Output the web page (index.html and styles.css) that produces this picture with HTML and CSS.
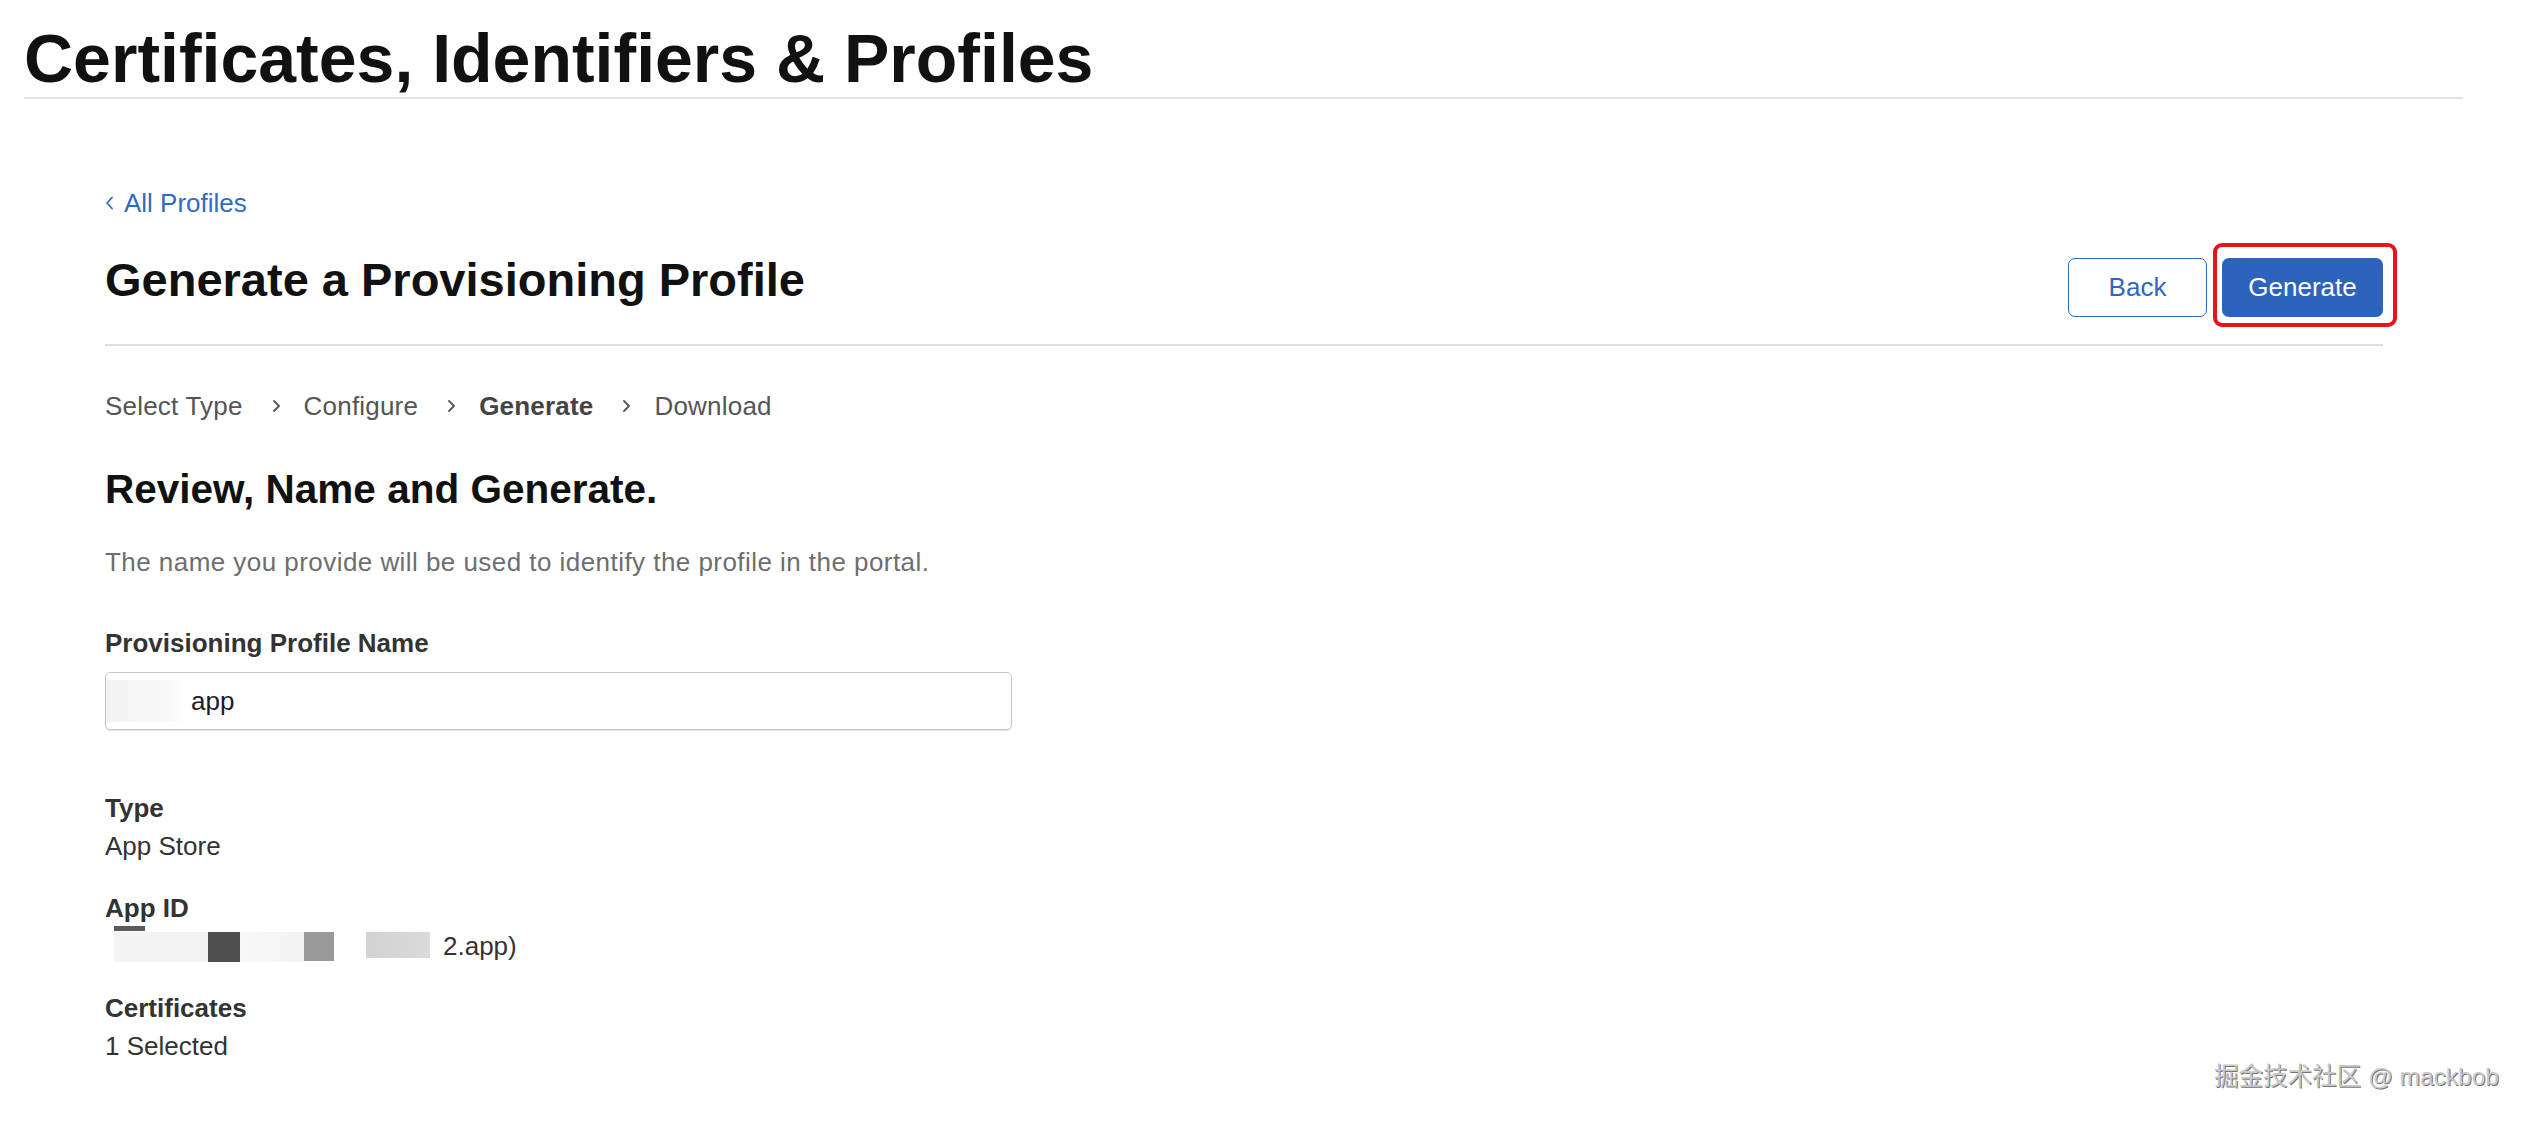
FILE: index.html
```html
<!DOCTYPE HTML>
<html>
<head>
<meta http-equiv="Content-Type" content="text/html; charset=utf-8">
<title>Generate a Provisioning Profile</title>
<link rel="stylesheet" href="styles.css">
</head>

<body>
<div class="page">
	<!-- top title -->
	<div class="top-hd">
		<h1>Certificates, Identifiers &amp; Profiles</h1>
	</div>

	<div class="main">
		<div class="back-row">
			<a class="back-link" href="javascript:;" target="_self">
				<svg width="9" height="14" viewBox="0 0 9 14"><polyline points="7,1.5 2,7 7,12.5" fill="none" stroke="#2f6cc2" stroke-width="1.8" stroke-linecap="round" stroke-linejoin="round"/></svg>
				All Profiles
			</a>
		</div>

		<!-- heading + buttons -->
		<div class="title-row">
			<h2>Generate a Provisioning Profile</h2>
			<div class="btns">
				<a class="btn btn-back" href="javascript:;" target="_self">Back</a>
				<a class="btn btn-gen" href="javascript:;" target="_self">Generate</a>
			</div>
		</div>

		<!-- steps -->
		<div class="steps">
			<span>Select Type</span>
			<svg width="9" height="12" viewBox="0 0 9 12"><polyline points="2,1 7,6 2,11" fill="none" stroke="#555" stroke-width="1.8" stroke-linecap="round" stroke-linejoin="round"/></svg>
			<span>Configure</span>
			<svg width="9" height="12" viewBox="0 0 9 12"><polyline points="2,1 7,6 2,11" fill="none" stroke="#555" stroke-width="1.8" stroke-linecap="round" stroke-linejoin="round"/></svg>
			<span class="on">Generate</span>
			<svg width="9" height="12" viewBox="0 0 9 12"><polyline points="2,1 7,6 2,11" fill="none" stroke="#555" stroke-width="1.8" stroke-linecap="round" stroke-linejoin="round"/></svg>
			<span>Download</span>
		</div>

		<h3>Review, Name and Generate.</h3>
		<p class="desc">The name you provide will be used to identify the profile in the portal.</p>

		<div class="field-label">Provisioning Profile Name</div>
		<div class="name-input"><span class="blur"></span>app</div>

		<!-- summary -->
		<dl class="info">
			<div class="info-item">
				<dt>Type</dt>
				<dd>App Store</dd>
			</div>
			<div class="info-item">
				<dt>App ID</dt>
				<dd class="app-id">
					<span class="mask m1"></span>
					<span class="mask m2"></span>
					<span class="mask m3"></span>
					<span class="mask m4"></span>
					<span class="mask m5"></span>
					<span class="app-txt">2.app)</span>
				</dd>
			</div>
			<div class="info-item">
				<dt>Certificates</dt>
				<dd>1 Selected</dd>
			</div>
		</dl>
	</div>

	<div class="wm">掘金技术社区 @ mackbob</div>
</div>
</body>
</html>
```

FILE: styles.css
```css
*{margin:0;padding:0;}
body{font-family:"Liberation Sans",Arial,"Noto Sans CJK SC",sans-serif;color:#1d1d1f;background:#fff;}
a{text-decoration:none;}
.page{position:relative;min-height:1122px;}

.top-hd{margin:0 65px 0 24px;padding:24px 0 5px;border-bottom:2px solid #e3e3e3;}
.top-hd h1{font-size:68px;line-height:68px;font-weight:bold;color:#111;}

.main{padding:0 145px 0 105px;}
.back-row{margin-top:86px;height:36px;}
.back-link{display:inline-flex;align-items:center;gap:10px;font-size:26px;line-height:36px;color:#2f6cc2;}

.title-row{display:flex;justify-content:space-between;align-items:flex-start;margin-top:30px;padding-bottom:27px;border-bottom:2px solid #dedede;}
.title-row h2{font-size:47px;line-height:58px;font-weight:bold;color:#111;}
.btns{display:flex;gap:15px;margin-top:7px;}
.btn{display:flex;align-items:center;justify-content:center;box-sizing:border-box;height:59px;border-radius:7px;font-size:26px;}
.btn-back{width:139px;border:1.5px solid #2f66bf;color:#2f66bf;background:#fff;}
.btn-gen{position:relative;width:161px;background:#2c63bd;color:#fff;}
.btn-gen:after{content:"";position:absolute;top:-15px;right:-14px;bottom:-10px;left:-9px;border:4px solid #e6151d;border-radius:9px;}

.steps{display:flex;align-items:center;margin-top:42px;font-size:26px;line-height:36px;letter-spacing:0.2px;color:#555;}
.steps svg{margin:0 23px 0 29px;}
.steps .on{font-weight:bold;color:#444;}

h3{margin-top:41px;font-size:40.5px;line-height:48px;font-weight:bold;color:#111;}
.desc{margin-top:31px;font-size:26px;line-height:36px;letter-spacing:0.45px;color:#6e6e6e;}

.field-label{margin-top:45px;font-size:26px;line-height:36px;font-weight:bold;color:#333;}
.name-input{display:flex;align-items:center;box-sizing:border-box;width:907px;height:58px;margin-top:11px;border:1px solid #c6c6c6;border-radius:5px;box-shadow:0 1px 1px rgba(0,0,0,.12);font-size:26px;color:#1d1d1f;}
.name-input .blur{width:78px;height:42px;margin-right:7px;background:linear-gradient(90deg,#f3f3f3,#f8f8f8 80%,#fff);}

.info{margin-top:59px;}
.info-item + .info-item{margin-top:24px;}
.info dt{font-size:26px;line-height:38px;font-weight:bold;color:#333;}
.info dd{font-size:26px;line-height:38px;color:#333;}
.info .app-id{display:flex;align-items:flex-start;}
.mask{display:block;height:30px;margin-top:5px;}
.m1{position:relative;width:94px;margin-left:9px;background:#f4f4f4;}
.m1:before{content:"";position:absolute;top:-6px;left:0;width:31px;height:5px;background:#5a5a5a;}
.m2{width:32px;background:#4f4f4f;}
.m3{width:64px;background:linear-gradient(90deg,#f8f8f8,#f3f3f3);}
.m4{width:30px;height:29px;background:#9a9a9a;}
.m5{width:64px;height:26px;margin-left:32px;background:linear-gradient(90deg,#d2d2d2,#dadada);}
.app-txt{margin-left:13px;}

.wm{position:absolute;right:29px;bottom:30px;font-size:24.5px;line-height:30px;color:#c9c9c9;text-shadow:1px 1px 0 #777;}
```
